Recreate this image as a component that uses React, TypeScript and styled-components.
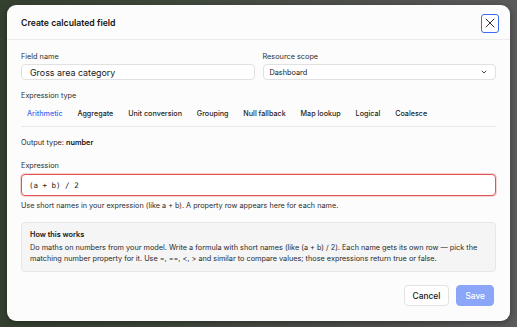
import { createGlobalStyle } from "styled-components";
import styled from "styled-components";

const GlobalStyle = createGlobalStyle`
    html, body {
        margin: 0;
        padding: 0;
    }
    body {
        font-family: Inter, "Noto Sans", "Liberation Sans", sans-serif;
        color: #1b1b1b;
    }
    * {
        box-sizing: border-box;
    }
`;

const Backdrop = styled.div`
    width: 517px;
    height: 327px;
    padding: 5px 7px 6px 7px;
    background: linear-gradient(90deg, #34402f 0%, #3e4739 30%, #4d4f4b 65%, #5b5b5b 100%);
    overflow: hidden;
`;

const Modal = styled.div`
    width: 503px;
    height: 316px;
    background: #fcfcfc;
    border-radius: 9px;
    display: flex;
    flex-direction: column;
    box-shadow: 0 2px 6px rgba(0, 0, 0, 0.35);
`;

const Header = styled.div`
    height: 35px;
    flex: none;
    display: flex;
    align-items: center;
    justify-content: space-between;
    padding: 2px 11px 0 14px;
    border-bottom: 1px solid #ececec;
`;

const Title = styled.h2`
    margin: 0;
    font-size: 8.7px;
    font-weight: 600;
    line-height: 12px;
    color: #141414;
`;

const CloseButton = styled.button`
    width: 18px;
    height: 19px;
    padding: 0;
    border: 1.5px solid #3d6bf5;
    border-radius: 3px;
    background: #ffffff;
    display: flex;
    align-items: center;
    justify-content: center;
    cursor: pointer;
`;

const Body = styled.div`
    padding: 12px 14px 0 14px;
    display: flex;
    flex-direction: column;
`;

const FieldGrid = styled.div`
    display: grid;
    grid-template-columns: 1fr 1fr;
    gap: 8px;
`;

const Field = styled.div`
    display: flex;
    flex-direction: column;
`;

const Label = styled.label<{ $top?: number }>`
    display: block;
    font-size: 7.3px;
    line-height: 9px;
    color: #2e2e2e;
    margin-top: ${(p) => p.$top ?? 0}px;
    margin-bottom: 3px;
`;

const TextInput = styled.div`
    height: 16px;
    border: 1px solid #e1e1e1;
    border-radius: 4px;
    background: #ffffff;
    padding: 0 8px;
    display: flex;
    align-items: center;
    font-size: 8.9px;
    color: #161616;
`;

const Select = styled.div`
    height: 16px;
    border: 1px solid #e1e1e1;
    border-radius: 4px;
    background: #ffffff;
    padding: 0 8px 0 6px;
    display: flex;
    align-items: center;
    justify-content: space-between;
    font-size: 7.3px;
    color: #161616;
`;

const TabList = styled.div`
    display: flex;
    gap: 2.8px;
    margin-top: 1px;
    border-bottom: 1px solid #e9e9e9;
`;

const Tab = styled.div<{ $active?: boolean }>`
    padding: 5px 6px 7px 6px;
    font-size: 7.2px;
    line-height: 10px;
    font-weight: 500;
    color: ${(p) => (p.$active ? "#3d6bf0" : "#1c1c1c")};
    white-space: nowrap;
`;

const OutputType = styled.div`
    margin-top: 11px;
    font-size: 7.3px;
    line-height: 10px;
    color: #2a2a2a;

    b {
        font-weight: 600;
        color: #141414;
    }
`;

const ExpressionInput = styled.div`
    height: 22px;
    margin-top: 1px;
    border: 1px solid #e05656;
    border-radius: 4px;
    background: #ffffff;
    box-shadow: 0 0 0 1px rgba(224, 86, 86, 0.25);
    padding: 0 7px;
    display: flex;
    align-items: center;
    font-family: "DejaVu Sans Mono", "Liberation Mono", monospace;
    font-size: 7.5px;
    color: #1a1a1a;
`;

const Hint = styled.p`
    margin: 5px 0 0 0;
    font-size: 7.25px;
    line-height: 10px;
    color: #2c2c2c;
`;

const InfoBox = styled.div`
    margin-top: 11px;
    height: 50px;
    border: 1px solid #e7e7e7;
    border-radius: 4px;
    background: #f5f5f5;
    padding: 7px 8px 0 8px;
`;

const InfoTitle = styled.div`
    font-size: 7.3px;
    line-height: 10px;
    font-weight: 600;
    color: #141414;
`;

const InfoText = styled.p`
    margin: 2px 0 0 0;
    font-size: 7.3px;
    line-height: 11px;
    color: #2a2a2a;
`;

const Footer = styled.div`
    margin-top: auto;
    display: flex;
    justify-content: flex-end;
    gap: 7px;
    padding: 0 16px 15px 0;
`;

const Button = styled.button<{ $primary?: boolean }>`
    height: 21px;
    padding: 0 8px;
    border-radius: 4px;
    border: 1px solid ${(p) => (p.$primary ? "#8ba5f8" : "#e2e2e2")};
    background: ${(p) => (p.$primary ? "#8ba5f8" : "#ffffff")};
    color: ${(p) => (p.$primary ? "#ffffff" : "#161616")};
    font-family: Inter, "Noto Sans", sans-serif;
    font-size: 8.4px;
    font-weight: 500;
    cursor: pointer;
`;

const tabs = [
    "Arithmetic",
    "Aggregate",
    "Unit conversion",
    "Grouping",
    "Null fallback",
    "Map lookup",
    "Logical",
    "Coalesce",
];

export default function App() {
    return (
        <>
            <GlobalStyle />
            <Backdrop>
                <Modal>
                    <Header>
                        <Title>Create calculated field</Title>
                        <CloseButton type="button" aria-label="Close">
                            <svg width="10" height="10" viewBox="0 0 10 10">
                                <path d="M1 1 L9 9 M9 1 L1 9" stroke="#1a1a1a" strokeWidth="0.9" strokeLinecap="round" />
                            </svg>
                        </CloseButton>
                    </Header>
                    <Body>
                        <FieldGrid>
                            <Field>
                                <Label>Field name</Label>
                                <TextInput>Gross area category</TextInput>
                            </Field>
                            <Field>
                                <Label>Resource scope</Label>
                                <Select>
                                    <span>Dashboard</span>
                                    <svg width="6" height="4" viewBox="0 0 6 4">
                                        <path d="M0.8 0.8 L3 3 L5.2 0.8" fill="none" stroke="#333" strokeWidth="0.9" />
                                    </svg>
                                </Select>
                            </Field>
                        </FieldGrid>

                        <Label $top={11}>Expression type</Label>
                        <TabList>
                            {tabs.map((t, i) => (
                                <Tab key={t} $active={i === 0}>
                                    {t}
                                </Tab>
                            ))}
                        </TabList>

                        <OutputType>
                            Output type: <b>number</b>
                        </OutputType>

                        <Label $top={13}>Expression</Label>
                        <ExpressionInput>(a + b) / 2</ExpressionInput>
                        <Hint>
                            Use short names in your expression (like a + b). A property row appears here for each name.
                        </Hint>

                        <InfoBox>
                            <InfoTitle>How this works</InfoTitle>
                            <InfoText>
                                Do maths on numbers from your model. Write a formula with short names (like (a + b) / 2). Each name gets its own row — pick the matching number property for it. Use =, ==, &lt;, &gt; and similar to compare values; those expressions return true or false.
                            </InfoText>
                        </InfoBox>
                    </Body>
                    <Footer>
                        <Button type="button">Cancel</Button>
                        <Button type="button" $primary>
                            Save
                        </Button>
                    </Footer>
                </Modal>
            </Backdrop>
        </>
    );
}
